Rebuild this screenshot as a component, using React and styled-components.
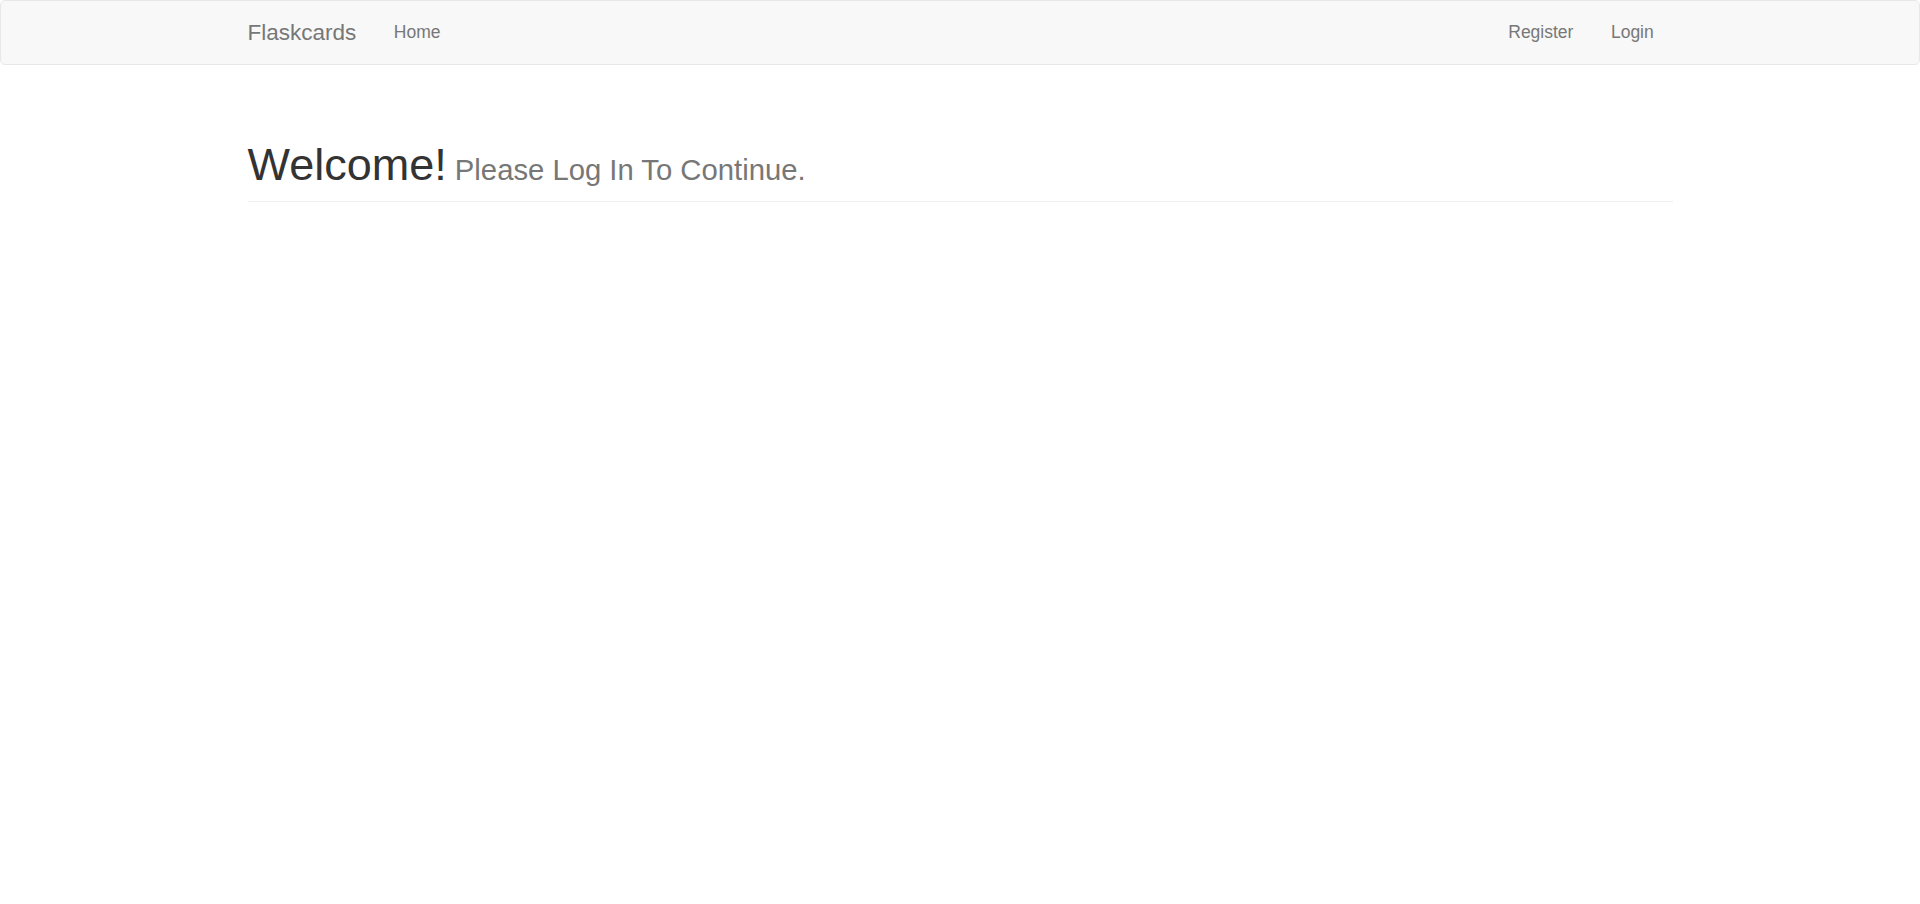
import React from 'react';
import styled, { createGlobalStyle } from 'styled-components';

/* Bootstrap 3 look, rendered at 125% */

const GlobalStyle = createGlobalStyle`
  html, body {
    margin: 0;
    padding: 0;
    background: #fff;
  }
  body {
    font-family: 'Liberation Sans', Arial, Helvetica, sans-serif;
    font-size: 17.5px;
    line-height: 25px;
    color: #333;
  }
  * { box-sizing: border-box; }
`;

const Page = styled.div`
  min-height: 904px;
  display: flex;
  flex-direction: column;
`;

/* ─── Navbar ───────────────────────────────────────────────────────────── */

const NavBar = styled.nav`
  background: #f8f8f8;
  border: 1px solid #e7e7e7;
  border-radius: 5px;
  min-height: 65px;
  margin-bottom: 25px;
`;

const Container = styled.div`
  width: 1462.5px;
  margin: 0 auto;
  padding: 0 18.75px;
`;

const NavInner = styled(Container)`
  display: flex;
  align-items: center;
  justify-content: space-between;
`;

const NavGroup = styled.div`
  display: flex;
  align-items: center;
  margin-left: ${({ right }) => (right ? '0' : '-18.75px')};
`;

const Brand = styled.a`
  display: block;
  height: 62.5px;
  padding: 18.75px;
  font-size: 22.5px;
  line-height: 25px;
  color: #777;
  text-decoration: none;
`;

const NavLink = styled.a`
  display: block;
  padding: 18.75px;
  font-size: 17.5px;
  line-height: 25px;
  color: #777;
  text-decoration: none;
  cursor: pointer;

  &:hover {
    color: #333;
  }
`;

/* ─── Page header ──────────────────────────────────────────────────────── */

const Header = styled.div`
  margin: 50px 0 25px;
  padding-bottom: 11.25px;
  border-bottom: 1px solid #eee;
`;

const Title = styled.h1`
  margin: 0;
  font-size: 45px;
  line-height: 49.5px;
  font-weight: 500;
  color: #333;
`;

const Sub = styled.small`
  font-size: 65%;
  font-weight: normal;
  line-height: 1;
  color: #777;
`;

export default function App() {
  return (
    <Page>
      <GlobalStyle />
      <NavBar>
        <NavInner>
          <NavGroup>
            <Brand>Flaskcards</Brand>
            <NavLink>Home</NavLink>
          </NavGroup>
          <NavGroup right>
            <NavLink>Register</NavLink>
            <NavLink>Login</NavLink>
          </NavGroup>
        </NavInner>
      </NavBar>
      <Container>
        <Header>
          <Title>
            Welcome!<Sub> Please Log In To Continue.</Sub>
          </Title>
        </Header>
      </Container>
    </Page>
  );
}
